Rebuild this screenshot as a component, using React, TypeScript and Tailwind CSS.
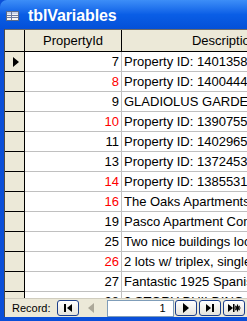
import React from 'react'

const rows: { id: number; red?: boolean; desc: string }[] = [
  { id: 7, desc: 'Property ID: 14013583 - Beautiful duplex' },
  { id: 8, red: true, desc: 'Property ID: 14004446 - Fourplex' },
  { id: 9, desc: 'GLADIOLUS GARDENS APARTMENTS' },
  { id: 10, red: true, desc: 'Property ID: 13907557 - Triplex' },
  { id: 11, desc: 'Property ID: 14029652 - Duplex' },
  { id: 13, desc: 'Property ID: 13724530 - Fourplex' },
  { id: 14, red: true, desc: 'Property ID: 13855316 - Duplex' },
  { id: 16, red: true, desc: 'The Oaks Apartments' },
  { id: 19, desc: 'Pasco Apartment Complex' },
  { id: 25, desc: 'Two nice buildings located' },
  { id: 26, red: true, desc: '2 lots w/ triplex, single family' },
  { id: 27, desc: 'Fantastic 1925 Spanish style' },
  { id: 28, desc: '2 STORY BUILDING WITH' },
]

function NavBtn({ children, disabled }: { children: React.ReactNode; disabled?: boolean }) {
  return (
    <div
      className={
        disabled
          ? 'w-[21px] h-[16px] shrink-0 flex items-center justify-center'
          : 'w-[22px] h-[16px] shrink-0 flex items-center justify-center rounded-[3px] border border-[#1c3f8a] bg-gradient-to-b from-[#ffffff] to-[#e6e4dc]'
      }
    >
      {children}
    </div>
  )
}

export default function App() {
  return (
    <div className="w-[247px] h-[321px] overflow-hidden bg-[#0a4fd8] flex flex-col" style={{ fontFamily: '"Liberation Sans", Arial, sans-serif' }}>
      {/* Title bar */}
      <div className="h-[29px] shrink-0 flex items-center gap-[9px] pl-[6px] pt-[2px] rounded-tl-[7px] bg-gradient-to-b from-[#3d8ef7] via-[#0a5ee6] to-[#0450d8]">
        <svg width="13" height="10" viewBox="0 0 13 10">
          <rect x="0.5" y="0.5" width="12" height="9" fill="#f4f4f4" stroke="#5a6a8a" />
          <rect x="1" y="1" width="11" height="2" fill="#c8d4ea" />
          <line x1="1" y1="4.5" x2="12" y2="4.5" stroke="#6a7aa0" />
          <line x1="1" y1="6.5" x2="12" y2="6.5" stroke="#6a7aa0" />
          <line x1="5.5" y1="1" x2="5.5" y2="9" stroke="#6a7aa0" />
        </svg>
        <span className="text-white font-bold text-[16px] leading-none tracking-[-0.1px]">tblVariables</span>
      </div>

      {/* Body */}
      <div className="flex-1 flex flex-col pl-[4px] pb-[4px] min-h-0">
        <div className="flex-1 flex flex-col bg-white min-h-0 border-l border-[#4a4a4a] overflow-hidden">
          {/* Header */}
          <div className="flex shrink-0 h-[23px] border-t border-b border-t-[#6b6b6b] border-b-black bg-[#ece9d8] text-[13px] text-black">
            <div className="w-[20px] shrink-0 border-r border-black" />
            <div className="w-[97px] shrink-0 border-r border-black flex items-center justify-center">PropertyId</div>
            <div className="w-[206px] shrink-0 border-r border-black flex items-center justify-center">Description</div>
          </div>
          {/* Rows */}
          <div className="flex-1 min-h-0 overflow-hidden">
            {rows.map((r, i) => (
              <div key={i} className="flex h-[20px] text-[13px]">
                <div className="w-[20px] shrink-0 bg-[#ece9d8] border-r border-b border-black flex items-center pl-[8px]">
                  {i === 0 && (
                    <svg width="6" height="10" viewBox="0 0 6 10">
                      <path d="M0 0 L6 5 L0 10 Z" fill="black" />
                    </svg>
                  )}
                </div>
                <div className={`w-[97px] shrink-0 border-r border-b border-[#c0c0c0] flex items-center justify-end pr-[2px] ${r.red ? 'text-[#ff0000]' : 'text-black'}`}>
                  {r.id}
                </div>
                <div className="w-[206px] shrink-0 border-b border-[#c0c0c0] flex items-center pl-[2px] whitespace-nowrap overflow-hidden text-black">
                  {r.desc}
                </div>
              </div>
            ))}
          </div>
          {/* Navigation bar */}
          <div className="h-[19px] shrink-0 bg-[#ece9d8] border-t border-[#d0cdbf] flex items-center text-[11px] text-black">
            <span className="ml-[7px] mr-[6px] shrink-0">Record:</span>
            <NavBtn>
              <svg width="10" height="10" viewBox="0 0 10 10">
                <rect x="1" y="1" width="2" height="8" fill="black" />
                <path d="M9 1 L4 5 L9 9 Z" fill="black" />
              </svg>
            </NavBtn>
            <div className="w-[2px] shrink-0" />
            <NavBtn disabled>
              <svg width="6" height="10" viewBox="0 0 6 10">
                <path d="M6 0 L0 5 L6 10 Z" fill="#aca899" />
              </svg>
            </NavBtn>
            <div className="w-[5px] shrink-0" />
            <div className="w-[67px] h-[17px] shrink-0 bg-white border border-[#7f9db9] flex items-center justify-end pr-[7px]">1</div>
            <div className="w-[1px] shrink-0" />
            <NavBtn>
              <svg width="6" height="10" viewBox="0 0 6 10">
                <path d="M0 0 L6 5 L0 10 Z" fill="black" />
              </svg>
            </NavBtn>
            <div className="w-[2px] shrink-0" />
            <NavBtn>
              <svg width="10" height="10" viewBox="0 0 10 10">
                <path d="M1 1 L6 5 L1 9 Z" fill="black" />
                <rect x="7" y="1" width="2" height="8" fill="black" />
              </svg>
            </NavBtn>
            <div className="w-[2px] shrink-0" />
            <NavBtn>
              <svg width="14" height="10" viewBox="0 0 14 10">
                <path d="M1 1 L6 5 L1 9 Z" fill="black" />
                <rect x="6" y="1" width="1.5" height="8" fill="black" />
                <g stroke="black" strokeWidth="1.2">
                  <line x1="10.5" y1="1.5" x2="10.5" y2="8.5" />
                  <line x1="7.5" y1="5" x2="13.5" y2="5" />
                  <line x1="8.3" y1="2.8" x2="12.7" y2="7.2" />
                  <line x1="12.7" y1="2.8" x2="8.3" y2="7.2" />
                </g>
              </svg>
            </NavBtn>
          </div>
        </div>
      </div>
    </div>
  )
}
